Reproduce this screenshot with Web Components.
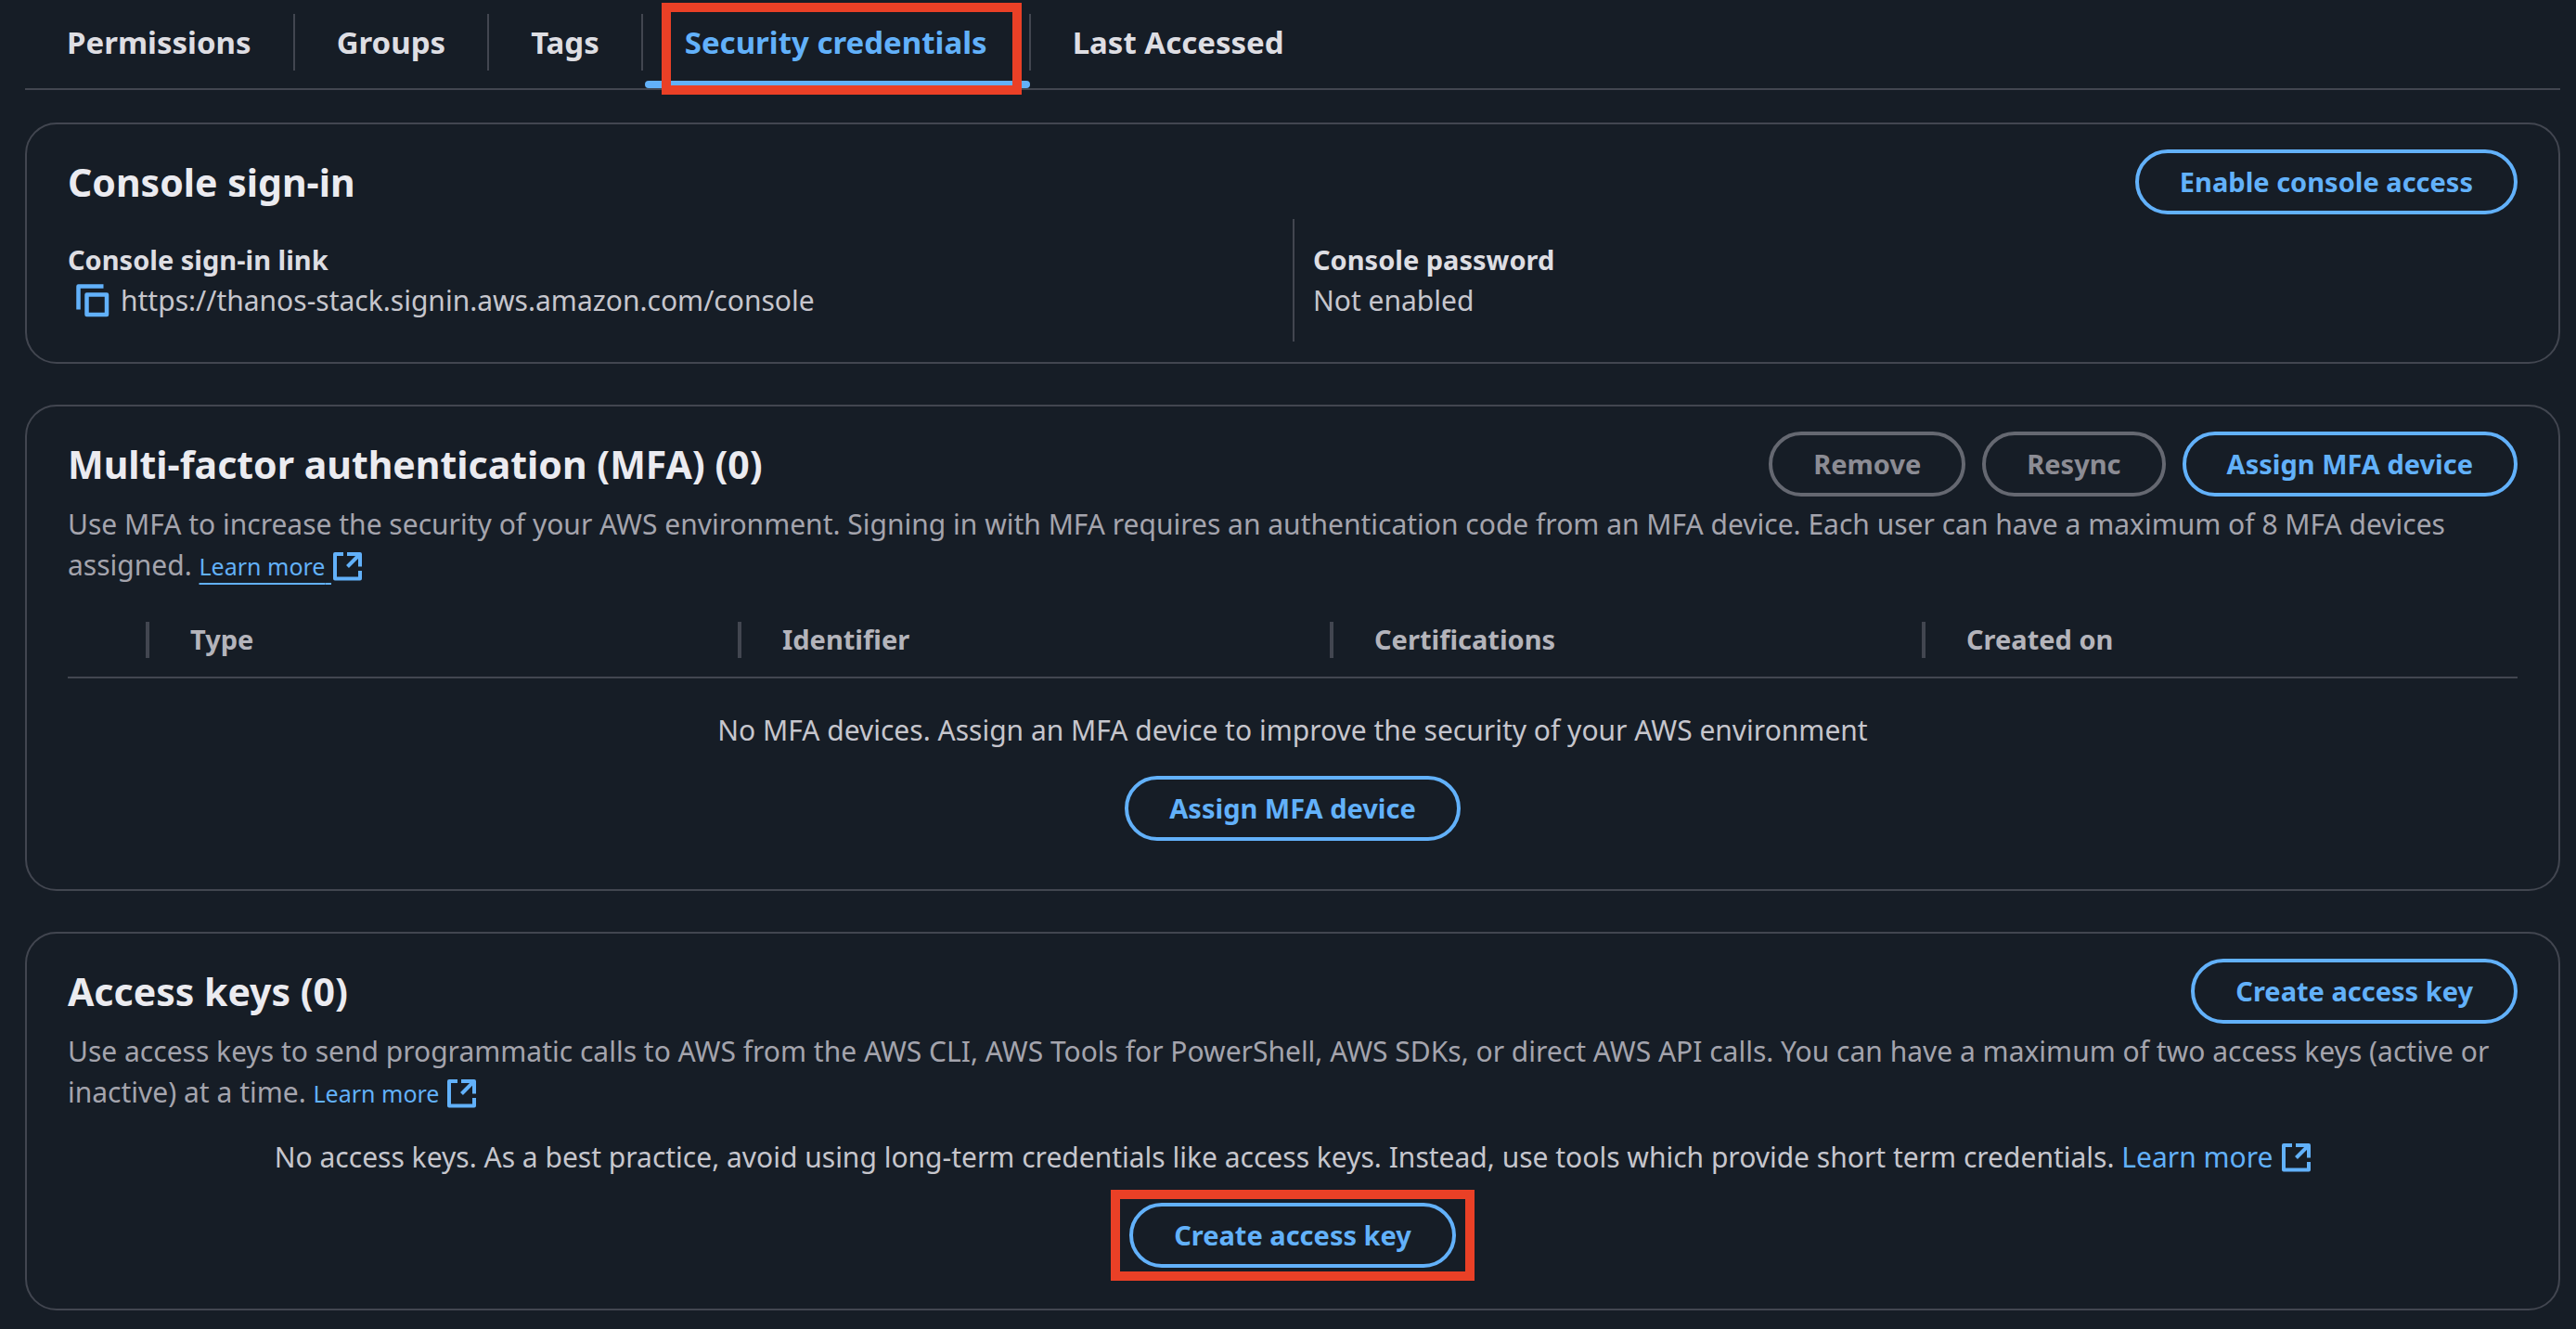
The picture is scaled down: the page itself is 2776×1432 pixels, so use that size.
<!DOCTYPE html>
<html lang="en">
<head>
<meta charset="utf-8">
<title>IAM user - Security credentials</title>
<style>
  :root {
    --bg: #161d26;
    --line: #424650;
    --accent: #62b1fa;
    --heading: #ebebf0;
    --label: #dedee3;
    --body: #c6c6cd;
    --muted: #a4a4ad;
    --column: #b4b4bb;
    --disabled: #656871;
    --disabled-text: #8c8c94;
    --mark: #ea4026;
  }
  body {
    margin: 0;
    background: var(--bg);
    color: var(--body);
    font: 400 30px/44px "Noto Sans", "Open Sans", sans-serif;
  }
</style>
</head>
<body>
<credentials-page></credentials-page>

<script>
  const define = (name, markup, setup) => {
    const template = document.createElement('template');
    template.innerHTML = markup;
    customElements.define(name, class extends HTMLElement {
      constructor() {
        super();
        this.attachShadow({ mode: 'open' }).append(template.content.cloneNode(true));
      }
      connectedCallback() {
        if (setup) setup(this, this.shadowRoot);
      }
    });
  };

  /* Pill button; "disabled" is passed through to the inner control */
  define('pill-button', `
    <style>
      :host { display: inline-flex; }
      button {
        box-sizing: border-box;
        height: 70px;
        padding: 0 44px;
        border: 4px solid var(--accent);
        border-radius: 35px;
        background: none;
        color: var(--accent);
        font: 700 29px/44px "Noto Sans", "Open Sans", sans-serif;
        white-space: nowrap;
      }
      button:disabled { border-color: var(--disabled); color: var(--disabled-text); }
    </style>
    <button type="button"><slot></slot></button>
  `, (host, root) => {
    root.querySelector('button').disabled = host.hasAttribute('disabled');
  });

  define('external-link', `
    <style>
      :host { display: inline; }
      a { color: var(--accent); text-decoration: none; white-space: nowrap; }
      :host([small]) span { font-size: 25px; line-height: 30px; }
      :host([underlined]) span {
        text-decoration: underline 2px;
        text-underline-offset: 8px;
      }
      span { white-space: pre; }
      svg { width: 31px; height: 31px; vertical-align: -5px; margin-left: 2px; }
      :host([small]) svg { vertical-align: -6px; }
    </style>
    <a href="#"><span><slot></slot> </span><svg viewBox="0 0 31 31" fill="none" stroke="currentColor" stroke-width="4" aria-hidden="true">
      <path d="M11 2H2V28.500H29V20" stroke-linejoin="round"/>
      <path d="M15 2H29V15.500" stroke-linejoin="round"/>
      <path d="M28.500 2.500L15.500 15.500"/>
    </svg></a>
  `);

  /* Red frame drawn over its content to call attention to it */
  define('call-out', `
    <style>
      :host { display: inline-flex; position: relative; }
      :host::after {
        content: "";
        position: absolute;
        inset: -14px -20px;
        border: 10px solid var(--mark);
        pointer-events: none;
      }
      :host([tab])::after { inset: 3px 10px -7px 20px; }
    </style>
    <slot></slot>
  `);

  define('tab-item', `
    <style>
      :host { display: flex; position: relative; padding: 15px 0 19px; }
      button {
        height: 61px;
        padding: 0 45px;
        border: 0;
        border-right: 2px solid var(--line);
        background: none;
        color: var(--label);
        font: 700 33px/61px "Noto Sans", "Open Sans", sans-serif;
        white-space: nowrap;
      }
      :host([last]) button { border-right: 0; }
      :host([active]) button { color: var(--accent); }
      :host([active])::after {
        content: "";
        position: absolute;
        inset: auto 1px 0 2px;
        height: 8px;
        border-radius: 4px;
        background: var(--accent);
      }
    </style>
    <button type="button" role="tab"><slot></slot></button>
  `, (host, root) => {
    root.querySelector('button').setAttribute('aria-selected', host.hasAttribute('active'));
  });

  define('tab-bar', `
    <style>
      :host { display: flex; border-bottom: 2px solid var(--line); }
    </style>
    <slot></slot>
  `);

  define('panel-card', `
    <style>
      :host {
        display: block;
        padding: 27px 44px 22px;
        border: 2px solid var(--line);
        border-radius: 34px;
      }
      header { display: flex; justify-content: space-between; align-items: center; }
      h2 { margin: 0; color: var(--heading); font-size: 41px; line-height: 70px; font-weight: 700; }
      .actions { display: flex; gap: 18px; }
      ::slotted([slot=description]) { margin: 8px 0 0; color: var(--muted); }
    </style>
    <header>
      <h2><slot name="title"></slot></h2>
      <div class="actions"><slot name="actions"></slot></div>
    </header>
    <slot name="description"></slot>
    <slot></slot>
  `);

  define('key-values', `
    <style>
      :host { display: grid; grid-template-columns: 1fr 1fr; margin-top: 5px; }
      ::slotted(key-value:not(:first-child)) { border-left: 2px solid var(--line); padding-left: 20px; }
    </style>
    <slot></slot>
  `);

  define('key-value', `
    <style>
      :host { display: block; padding: 22px 0; }
      dl, dd { margin: 0; }
      dt { color: var(--label); font-size: 29px; font-weight: 700; }
      dd { display: flex; align-items: center; }
    </style>
    <dl><dt><slot name="label"></slot></dt><dd><slot></slot></dd></dl>
  `);

  define('copy-button', `
    <style>
      :host { display: inline-flex; }
      button { display: flex; padding: 0 12px 0 9px; border: 0; background: none; color: var(--accent); }
      svg { width: 36px; height: 36px; }
    </style>
    <button type="button" aria-label="Copy sign-in link">
      <svg viewBox="0 0 36 36" fill="none" stroke="currentColor" stroke-width="4.500" stroke-linejoin="round" aria-hidden="true">
        <path d="M2.500 27.500V2.500H29.500"/>
        <path d="M11.500 11.500H33V33H11.500Z"/>
      </svg>
    </button>
  `);

  define('mfa-table', `
    <style>
      :host { display: block; margin-top: 18px; }
      table { width: 100%; table-layout: fixed; border-collapse: separate; border-spacing: 0; }
      .select { width: 88px; }
      th {
        padding: 18px 0;
        border-bottom: 2px solid var(--line);
        color: var(--column);
        font-size: 29px;
        font-weight: 700;
        text-align: left;
      }
      th div { display: flex; align-items: center; justify-content: space-between; height: 44px; padding-left: 44px; }
      th:not(:last-child) div::after { content: ""; width: 4px; height: 39px; margin-left: auto; background: var(--line); }
      td { padding: 34px 0 30px; text-align: center; }
    </style>
    <table>
      <thead>
        <tr>
          <th class="select" scope="col"><div></div></th>
          <th scope="col"><div>Type</div></th>
          <th scope="col"><div>Identifier</div></th>
          <th scope="col"><div>Certifications</div></th>
          <th scope="col"><div>Created on</div></th>
        </tr>
      </thead>
      <tbody><tr><td colspan="5"><slot></slot></td></tr></tbody>
    </table>
  `);

  define('empty-state', `
    <style>
      :host { display: flex; flex-direction: column; align-items: center; gap: 27px; }
      p { margin: 0; }
    </style>
    <p><slot></slot></p>
    <slot name="action"></slot>
  `);

  define('credentials-page', `
    <style>
      :host { display: block; padding: 0 17px 20px 27px; }
      main { display: flex; flex-direction: column; gap: 44px; margin-top: 35px; }
      .keys { margin: 26px 0 22px; }
    </style>
    <tab-bar role="tablist">
      <tab-item>Permissions</tab-item>
      <tab-item>Groups</tab-item>
      <tab-item>Tags</tab-item>
      <call-out tab><tab-item active>Security credentials</tab-item></call-out>
      <tab-item last>Last Accessed</tab-item>
    </tab-bar>
    <main>
      <panel-card>
        <span slot="title">Console sign-in</span>
        <pill-button slot="actions">Enable console access</pill-button>
        <key-values>
          <key-value>
            <span slot="label">Console sign-in link</span>
            <copy-button></copy-button>
            <span>https://thanos-stack.signin.aws.amazon.com/console</span>
          </key-value>
          <key-value>
            <span slot="label">Console password</span>
            <span>Not enabled</span>
          </key-value>
        </key-values>
      </panel-card>

      <panel-card>
        <span slot="title">Multi-factor authentication (MFA) (0)</span>
        <pill-button slot="actions" disabled>Remove</pill-button>
        <pill-button slot="actions" disabled>Resync</pill-button>
        <pill-button slot="actions">Assign MFA device</pill-button>
        <p slot="description">Use MFA to increase the security of your AWS environment. Signing in with MFA requires an authentication code from an MFA device. Each user can have a maximum of 8 MFA devices assigned. <external-link small underlined>Learn more</external-link></p>
        <mfa-table>
          <empty-state>
            No MFA devices. Assign an MFA device to improve the security of your AWS environment
            <pill-button slot="action">Assign MFA device</pill-button>
          </empty-state>
        </mfa-table>
      </panel-card>

      <panel-card>
        <span slot="title">Access keys (0)</span>
        <pill-button slot="actions">Create access key</pill-button>
        <p slot="description">Use access keys to send programmatic calls to AWS from the AWS CLI, AWS Tools for PowerShell, AWS SDKs, or direct AWS API calls. You can have a maximum of two access keys (active or inactive) at a time. <external-link small>Learn more</external-link></p>
        <empty-state class="keys">
          No access keys. As a best practice, avoid using long-term credentials like access keys. Instead, use tools which provide short term credentials. <external-link>Learn more</external-link>
          <call-out slot="action"><pill-button>Create access key</pill-button></call-out>
        </empty-state>
      </panel-card>
    </main>
  `);
</script>
</body>
</html>
